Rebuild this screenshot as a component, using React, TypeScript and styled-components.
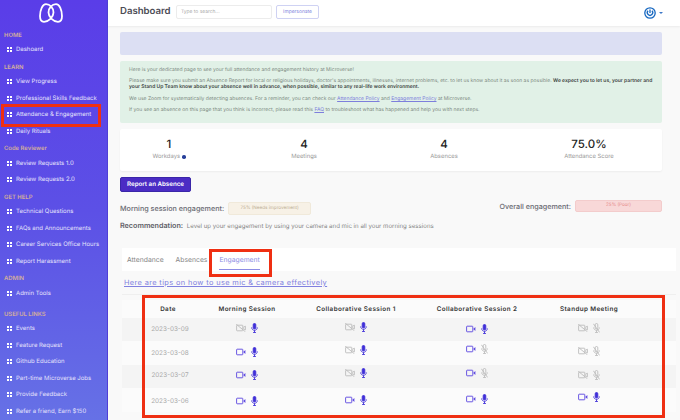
import React from "react";
import styled, { createGlobalStyle } from "styled-components";

const Global = createGlobalStyle`
  html, body { margin: 0; padding: 0; background: #f9f9f9; }
  * { box-sizing: border-box; }
  body { font-family: Inter, "Noto Sans", "Liberation Sans", sans-serif; text-rendering: geometricPrecision; }
`;

const Page = styled.div`
  position: relative; width: 680px; height: 420px; overflow: hidden;
  display: flex; background: #f9f9f9; color: #555;
`;
const Sidebar = styled.aside`
  width: 108px; height: 420px; flex: none;
  background: linear-gradient(180deg, #5a3de8 0%, #5c50e6 50%, #6671e6 100%);
  border-right: 1px solid #4f3fd6;
`;
const LogoWrap = styled.div`
  height: 28.5px; display: flex; justify-content: center; align-items: flex-start; padding: 3px 6px 0 0;
`;
const NavSection = styled.section<{ $gap?: number }>`
  margin-top: ${(p) => p.$gap ?? 2.5}px;
  &:first-of-type { margin-top: 0; }
`;
const NavLabel = styled.div`
  height: 13px; line-height: 13px; padding-left: 4px;
  font-size: 5.9px; font-weight: 600; color: #d2ae9c; white-space: nowrap;
`;
const NavItem = styled.div`
  height: 16.5px; display: flex; align-items: center; gap: 4px; padding-left: 7px;
  font-size: 6px; color: #e4e2fb; white-space: nowrap;
`;
const NavGlyph = styled.span`
  width: 5px; height: 5px; flex: none; display: grid; grid-template-columns: 1fr 1fr; gap: 0.7px;
  & > i { background: #fff; display: block; }
`;

const Main = styled.main`
  flex: 1; min-width: 0; display: flex; flex-direction: column;
`;
const Header = styled.header`
  height: 26px; flex: none; background: #fff; box-shadow: 0 1px 2px rgba(0,0,0,.06);
  display: flex; align-items: center; padding: 0 17px 3px 12px;
`;
const Title = styled.h1`
  margin: 0; font-size: 9.6px; font-weight: 600; color: #4b4b55; width: 56px; white-space: nowrap;
`;
const Search = styled.div`
  width: 96px; height: 14px; border: 1px solid #ececec; border-radius: 2px; background: #fff;
  font-size: 4.9px; color: #aaa; padding-left: 4px; line-height: 12px;
`;
const Impersonate = styled.div`
  margin-left: 4px; width: 43px; height: 14px; border: 1px solid #cfd2f3; border-radius: 2px;
  font-size: 4.9px; color: #7d7fdc; text-align: center; line-height: 12px;
`;
const HeaderRight = styled.div`
  margin-left: auto; display: flex; align-items: center; gap: 3px; padding-top: 3px;
`;
const Caret = styled.span`
  width: 0; height: 0; border-left: 2px solid transparent; border-right: 2px solid transparent;
  border-top: 2px solid #3d78c8;
`;

const Content = styled.div`
  flex: 1; padding: 6px 18px 0 12px; display: flex; flex-direction: column;
`;
const Banner = styled.div`
  height: 23px; background: #dcdff3; border-radius: 2px; flex: none;
`;
const Notice = styled.div`
  margin-top: 6px; height: 62px; background: #e1f1e7; border-radius: 2px; flex: none;
  padding: 7px 0 0 9px; font-size: 5px; line-height: 5.8px; color: #7d8a82; white-space: nowrap;
  & p { margin: 0 0 5.7px; }
  & b { color: #3c443f; font-weight: 600; }
  & a { color: #7d7fdc; text-decoration: underline; }
`;
const Stats = styled.div`
  margin-top: 6px; height: 42px; flex: none; background: #fff; border-radius: 2px;
  box-shadow: 0 1px 2px rgba(0,0,0,.05);
  display: grid; grid-template-columns: 98px 172px 108px 1fr; text-align: center; padding-top: 8px;
  & > div:last-child { padding-left: 18px; }
`;
const StatValue = styled.div`
  font-size: 11.5px; font-weight: 500; color: #222; line-height: 14px;
`;
const StatLabel = styled.div`
  margin-top: 2px; font-size: 5.9px; color: #9a9a9a; line-height: 8px;
  display: flex; justify-content: center; align-items: center; gap: 2px;
`;
const InfoDot = styled.span`
  width: 3.5px; height: 3.5px; border-radius: 50%; background: #27409a;
`;
const ReportButton = styled.div`
  margin-top: 6px; width: 71px; height: 15px; flex: none; background: #4b2cc4; border: 1px solid #3a26a8;
  border-radius: 2px; color: #fff; font-size: 6.2px; font-weight: 600; text-align: center; line-height: 13px;
`;
const EngagementRow = styled.div`
  margin-top: 10px; height: 14px; flex: none; display: flex; align-items: flex-start; justify-content: space-between;
`;
const EngagementGroup = styled.div<{ $up?: number }>`
  display: flex; align-items: center; gap: 4px; margin-top: ${(p) => -(p.$up ?? 0)}px;
`;
const EngageLabel = styled.span`
  font-size: 7.2px; font-weight: 500; color: #6a6a72; white-space: nowrap;
`;
const Badge = styled.span<{ $w: number; $h: number; $bg: string; $fg: string; $bd: string }>`
  display: block; width: ${(p) => p.$w}px; height: ${(p) => p.$h}px; line-height: ${(p) => p.$h - 2}px;
  background: ${(p) => p.$bg}; color: ${(p) => p.$fg}; border: 1px solid ${(p) => p.$bd};
  border-radius: 2px; font-size: 4.6px; text-align: center; white-space: nowrap;
`;
const Recommendation = styled.div`
  margin-top: 5px; font-size: 6.1px; color: #858585; white-space: nowrap; line-height: 9px; flex: none;
  & b { font-size: 7.2px; font-weight: 600; color: #5e5e66; margin-right: 2px; }
`;
const TabsBar = styled.div`
  margin: 17px -14px 0 2px; height: 23px; flex: none; background: #fff; display: flex; padding-left: 5px; gap: 12px;
`;
const Tab = styled.div<{ $active?: boolean }>`
  height: 22px; line-height: 23px; font-size: 6.8px; white-space: nowrap;
  color: ${(p) => (p.$active ? "#8c8ce4" : "#858585")};
  ${(p) => p.$active && "border-bottom: 1px solid #8c8ce4;"}
`;
const TipLink = styled.a`
  margin: 7px 0 0 4px; font-size: 7.4px; letter-spacing: 0.37px; line-height: 10px; color: #8080e0;
  text-decoration: underline; white-space: nowrap; flex: none;
`;
const Table = styled.div`
  margin: 6px -14px 0 2px; border-top: 1px solid #efefef; padding-top: 5px; flex: none;
`;
const Row = styled.div<{ $shade?: boolean; $head?: boolean }>`
  display: grid; grid-template-columns: 92px 66px 152px 90px 134px 1fr;
  height: ${(p) => (p.$head ? 17.5 : 23.5)}px; align-items: center; justify-items: center;
  background: ${(p) => (p.$shade ? "#f4f4f4" : "#fbfbfb")};
`;
const HeadCell = styled.div`
  font-size: 6.3px; font-weight: 600; letter-spacing: 0.4px; color: #333; white-space: nowrap;
`;
const DateCell = styled.div<{ $dy: number }>`
  font-size: 6.4px; color: #aaa; margin: ${(p) => p.$dy * 2}px 0 0 4px;
`;
const IconCell = styled.div<{ $dy: number }>`
  display: flex; align-items: center; gap: 5px; margin-top: ${(p) => p.$dy * 2}px;
`;
const Callout = styled.div<{ $x: number; $y: number; $w: number; $h: number }>`
  position: absolute; left: ${(p) => p.$x}px; top: ${(p) => p.$y}px;
  width: ${(p) => p.$w}px; height: ${(p) => p.$h}px; border: 3px solid #ef2f12; pointer-events: none;
`;

const Logo = () => (
  <svg width="24" height="20" viewBox="0 0 24 20" fill="none" stroke="#fff" strokeWidth="1.8" strokeLinejoin="round">
    <path d="M7 1.2C3.5 1.2 1 7 1 13 1 16.8 2.8 18.8 5 18.8 9.5 18.8 14.5 14 14.5 9.5 14.5 5 11 1.2 7 1.2Z" />
    <path d="M17 1.2C20.5 1.2 23 7 23 13 23 16.8 21.2 18.8 19 18.8 14.5 18.8 9.5 14 9.5 9.5 9.5 5 13 1.2 17 1.2Z" />
  </svg>
);
const Power = () => (
  <svg width="12" height="12" viewBox="0 0 12 12" fill="none" stroke="#1667c0" strokeWidth="1.3">
    <circle cx="6" cy="6" r="5.2" />
    <path d="M4 3.8A2.7 2.7 0 1 0 8 3.8" />
    <path d="M6 2.6V6" />
  </svg>
);
const Cam = ({ on }: { on: boolean }) => {
  const c = on ? "#5a45e0" : "#bcbcbc";
  return (
    <svg width="10" height="8" viewBox="0 0 10 8" fill="none" stroke={c} strokeWidth="0.9">
      <rect x="0.6" y="1.2" width="6.2" height="5.6" rx="0.6" />
      {on ? (
        <path d="M7.2 4 9.4 2V6Z" fill={c} stroke="none" />
      ) : (
        <>
          <path d="M7.2 3.4 9.4 2.2V5.8L7.2 4.6" />
          <path d="M0.2 0.2 9.4 7.8" />
        </>
      )}
    </svg>
  );
};
const Mic = ({ on }: { on: boolean }) => {
  const c = on ? "#3f2fd8" : "#bcbcbc";
  return (
    <svg width="7" height="10" viewBox="0 0 7 10" fill="none" stroke={c} strokeWidth="0.9">
      <rect x="2.2" y="0.5" width="2.6" height="5.4" rx="1.3" fill={on ? c : "none"} />
      <path d="M0.7 4.4C0.7 6.2 2 7.3 3.5 7.3S6.3 6.2 6.3 4.4M3.5 7.3V9.6M2 9.6H5" />
      {!on && <path d="M0.4 0.8 6.6 9.4" />}
    </svg>
  );
};

type CellData = [boolean, boolean, number];
const rows: { date: string; dy: number; cells: CellData[] }[] = [
  { date: "2023-03-09", dy: -0.5, cells: [[false, true, -1], [false, true, -2], [true, true, 0], [false, false, -1]] },
  { date: "2023-03-08", dy: 0, cells: [[true, true, -1], [false, true, -3], [true, false, -4], [false, false, -2]] },
  { date: "2023-03-07", dy: -1.5, cells: [[true, true, -1.5], [false, true, -3.5], [true, false, -3.5], [false, false, -1.5]] },
  { date: "2023-03-06", dy: 1, cells: [[true, true, 1], [true, true, 0], [true, true, -1], [true, true, -3]] },
];
const nav: { label: string; gap?: number; items: string[] }[] = [
  { label: "HOME", items: ["Dashoard"] },
  { label: "LEARN", items: ["View Progress", "Professional Skills Feedback", "Attendance & Engagement", "Daily Rituals"] },
  { label: "Code Reviewer", items: ["Review Requests 1.0", "Review Requests 2.0"] },
  { label: "GET HELP", items: ["Technical Questions", "FAQs and Announcements", "Career Services Office Hours", "Report Harassment"] },
  { label: "ADMIN", items: ["Admin Tools"] },
  { label: "USEFUL LINKS", gap: 6, items: ["Events", "Feature Request", "Github Education", "Part-time Microverse Jobs", "Provide Feedback", "Refer a friend, Earn $150"] },
];
const heads = ["Date", "Morning Session", "Collaborative Session 1", "Collaborative Session 2", "Standup Meeting"];

export default function App() {
  return (
    <Page>
      <Global />
      <Sidebar>
        <LogoWrap><Logo /></LogoWrap>
        {nav.map((s) => (
          <NavSection key={s.label} $gap={s.gap}>
            <NavLabel>{s.label}</NavLabel>
            {s.items.map((t) => (
              <NavItem key={t}>
                <NavGlyph><i /><i /><i /><i /></NavGlyph>
                {t}
              </NavItem>
            ))}
          </NavSection>
        ))}
      </Sidebar>
      <Main>
        <Header>
          <Title>Dashboard</Title>
          <Search>Type to search...</Search>
          <Impersonate>Impersonate</Impersonate>
          <HeaderRight><Power /><Caret /></HeaderRight>
        </Header>
        <Content>
          <Banner />
          <Notice>
            <p>Here is your dedicated page to see your full attendance and engagement history at Microverse!</p>
            <p>
              Please make sure you submit an Absence Report for local or religious holidays, doctor's appointments, illnesses, internet problems, etc. to let us know about it as soon as possible. <b>We expect you to let us, your partner and</b>
              <br />
              <b>your Stand Up Team know about your absence well in advance, when possible, similar to any real-life work environment.</b>
            </p>
            <p>We use Zoom for systematically detecting absences. For a reminder, you can check our <a>Attendance Policy</a> and <a>Engagement Policy</a> at Microverse.</p>
            <p>If you see an absence on this page that you think is incorrect, please read this <a>FAQ</a> to troubleshoot what has happened and help you with next steps.</p>
          </Notice>
          <Stats>
            <div><StatValue>1</StatValue><StatLabel>Workdays <InfoDot /></StatLabel></div>
            <div><StatValue>4</StatValue><StatLabel>Meetings</StatLabel></div>
            <div><StatValue>4</StatValue><StatLabel>Absences</StatLabel></div>
            <div><StatValue>75.0%</StatValue><StatLabel>Attendance Score</StatLabel></div>
          </Stats>
          <ReportButton>Report an Absence</ReportButton>
          <EngagementRow>
            <EngagementGroup>
              <EngageLabel>Morning session engagement:</EngageLabel>
              <Badge $w={83} $h={13} $bg="#f7f1e6" $fg="#bcae94" $bd="#f0e9da">75% (Needs improvement)</Badge>
            </EngagementGroup>
            <EngagementGroup $up={2}>
              <EngageLabel>Overall engagement:</EngageLabel>
              <Badge $w={87} $h={12} $bg="#f8d8d8" $fg="#e68a8a" $bd="#f3cccc">25% (Poor)</Badge>
            </EngagementGroup>
          </EngagementRow>
          <Recommendation><b>Recommendation:</b> Level up your engagement by using your camera and mic in all your morning sessions</Recommendation>
          <TabsBar>
            <Tab>Attendance</Tab>
            <Tab>Absences</Tab>
            <Tab $active>Engagement</Tab>
          </TabsBar>
          <TipLink>Here are tips on how to use mic &amp; camera effectively</TipLink>
          <Table>
            <Row $head>
              {heads.map((h) => <HeadCell key={h}>{h}</HeadCell>)}
            </Row>
            {rows.map((r, i) => (
              <Row key={r.date} $shade={i % 2 === 0}>
                <DateCell $dy={r.dy}>{r.date}</DateCell>
                {r.cells.map((c, j) => (
                  <IconCell key={j} $dy={c[2]}>
                    <Cam on={c[0]} />
                    <Mic on={c[1]} />
                  </IconCell>
                ))}
              </Row>
            ))}
          </Table>
        </Content>
      </Main>
      <Callout $x={1} $y={104} $w={100} $h={23} />
      <Callout $x={209} $y={249} $w={63} $h={28} />
      <Callout $x={142} $y={295} $w={523} $h={123} />
    </Page>
  );
}
